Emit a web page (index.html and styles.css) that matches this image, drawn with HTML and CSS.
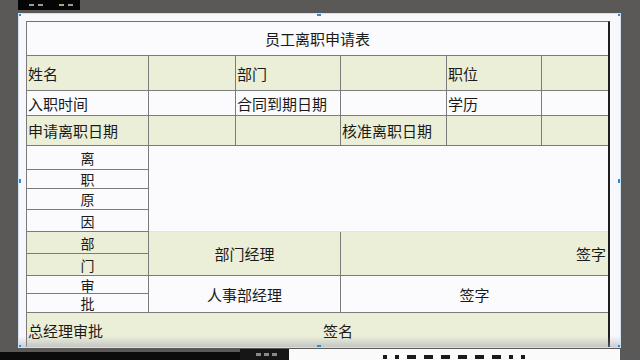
FILE: index.html
```html
<!DOCTYPE html>
<html lang="zh-CN">
<head>
<meta charset="utf-8">
<title>员工离职申请表</title>
<link rel="stylesheet" href="styles.css">
</head>
<body>
<div class="top">
  <div class="tab"><i class="mk g"></i><i class="mk g"></i><i class="mk y"></i><i class="mk g"></i></div>
</div>
<div class="paper">
  <div class="sheet">
    <div class="c title">员工离职申请表</div>

    <div class="c t">姓名</div><div class="c t"></div><div class="c t">部门</div><div class="c t"></div><div class="c t">职位</div><div class="c t last"></div>

    <div class="c">入职时间</div><div class="c"></div><div class="c">合同到期日期</div><div class="c"></div><div class="c">学历</div><div class="c last"></div>

    <div class="c t">申请离职日期</div><div class="c t"></div><div class="c t"></div><div class="c t">核准离职日期</div><div class="c t"></div><div class="c t last"></div>

    <div class="c k">离</div>
    <div class="c k">职</div>
    <div class="c k">原</div>
    <div class="c k">因</div>
    <div class="c reason"></div>

    <div class="c k t">部</div>
    <div class="c k t">门</div>
    <div class="c t mgr r9">部门经理</div>
    <div class="c t sign r9 right">签字</div>

    <div class="c k">审</div>
    <div class="c k">批</div>
    <div class="c mgr r11">人事部经理</div>
    <div class="c sign r11 mid">签字</div>

    <div class="c t gm"><span class="gm-label">总经理审批</span><span>签名</span></div>
  </div>
  <span class="h tl"></span><span class="h tm"></span><span class="h tr"></span>
  <span class="h ml"></span><span class="h mr"></span>
  <span class="h bl"></span><span class="h bm"></span><span class="h br"></span>
</div>
<div class="bottom">
  <div class="b1"></div>
  <div class="b2"><i class="dot"></i><i class="dot"></i><i class="dot"></i></div>
  <div class="b3"><i class="dash s"></i><i class="dash s"></i><i class="dash"></i><i class="dash"></i><i class="dash"></i><i class="dash"></i><i class="dash"></i><i class="dash"></i><i class="dash s"></i><i class="dash s"></i></div>
</div>
</body>
</html>
```
FILE: styles.css
```css
html, body {
  margin: 0;
  padding: 0;
}
body {
  width: 640px;
  height: 360px;
  overflow: hidden;
  background: #5b5957;
  font-family: "Noto Sans CJK SC", "Noto Sans", sans-serif;
  color: #1a1a1a;
}
.top {
  height: 13px;
  display: flex;
}
.tab {
  margin-left: 18px;
  width: 62px;
  height: 10px;
  background: #050505;
  display: flex;
  align-items: center;
  gap: 4px;
  padding-left: 11px;
  box-sizing: border-box;
}
.mk {
  display: inline-block;
  width: 5px;
  height: 2px;
  background: #9a9a9a;
}
.mk.y { margin-left: 12px; background: #a8a878; }
.paper {
  position: relative;
  margin-left: 18px;
  width: 603px;
  height: 335px;
  box-sizing: border-box;
  border: 1px solid #cfe2f3;
  background: #f8f8fc;
  padding: 7px 0 0 7px;
  overflow: hidden;
}
.paper::after {
  content: "";
  position: absolute;
  left: 0;
  right: 0;
  bottom: 0;
  height: 11px;
  background: linear-gradient(rgba(160,160,175,0), rgba(150,150,170,0.45));
}
.sheet {
  display: grid;
  grid-template-columns: 122px 87px 105px 106px 95px 66px;
  grid-template-rows: 34px 35px 25px 30px 24px 19px 21px 22px 22px 22px 18px 19px 34px;
  width: max-content;
  border-top: 1px solid #707070;
  border-left: 1px solid #7a7a7a;
  border-right: 2px solid #1e1e1e;
  background: #fbfbfe;
}
.c {
  box-sizing: border-box;
  border-right: 1px solid #7b7b7b;
  border-bottom: 1px solid #7b7b7b;
  display: flex;
  align-items: center;
  padding-left: 1px;
  font-size: 15px;
  line-height: 1;
  white-space: nowrap;
  background: #fbfbfe;
}
.c.t { background: #ebefd8; }
.c.last { border-right: none; }
.title {
  grid-column: 1 / -1;
  border-right: none;
  justify-content: center;
  padding-left: 0;
}
.k {
  grid-column: 1;
  justify-content: center;
  padding-left: 0;
  font-size: 14px;
  overflow: hidden;
}
.reason {
  grid-column: 2 / -1;
  grid-row: 5 / 9;
  border-right: none;
  border-bottom: 1px solid #eded9c;
}
.mgr {
  grid-column: 2 / 4;
  justify-content: center;
  padding-left: 0;
}
.sign {
  grid-column: 4 / -1;
  border-right: none;
}
.r9 { grid-row: 9 / 11; }
.r11 { grid-row: 11 / 13; }
.sign.right {
  justify-content: flex-end;
  padding-right: 2px;
}
.sign.mid {
  justify-content: center;
  padding-left: 0;
}
.gm {
  grid-column: 1 / -1;
  border: none;
  align-items: flex-start;
  padding-top: 10px;
}
.gm-label {
  width: 295px;
}
.h {
  position: absolute;
  width: 4px;
  height: 4px;
  background: #1f8fe0;
  z-index: 2;
}
.tl { left: -2px; top: -2px; }
.tm { left: 298px; top: -2px; }
.tr { right: -2px; top: -2px; }
.ml { left: -2px; top: 165px; }
.mr { right: -2px; top: 165px; }
.bl { left: -2px; bottom: -2px; }
.bm { left: 298px; bottom: -2px; }
.br { right: -2px; bottom: -2px; }
.bottom {
  display: flex;
  height: 12px;
}
.b1 {
  width: 240px;
  height: 8px;
  margin-top: 4px;
  background: #0b0b0b;
}
.b2 {
  width: 49px;
  margin-top: 1px;
  background: #161616;
  display: flex;
  align-items: center;
  gap: 3px;
  padding-left: 16px;
  box-sizing: border-box;
}
.dot {
  display: inline-block;
  width: 5px;
  height: 3px;
  background: #8a8a8a;
}
.b3 {
  width: 331px;
  margin-top: 1px;
  background: #fafafa;
  display: flex;
  align-items: center;
  gap: 8px;
  padding-left: 94px;
  box-sizing: border-box;
}
.dash {
  display: inline-block;
  width: 9px;
  height: 4px;
  background: #1a1a1a;
  margin-top: 4px;
}
.dash.s { width: 4px; }
```
